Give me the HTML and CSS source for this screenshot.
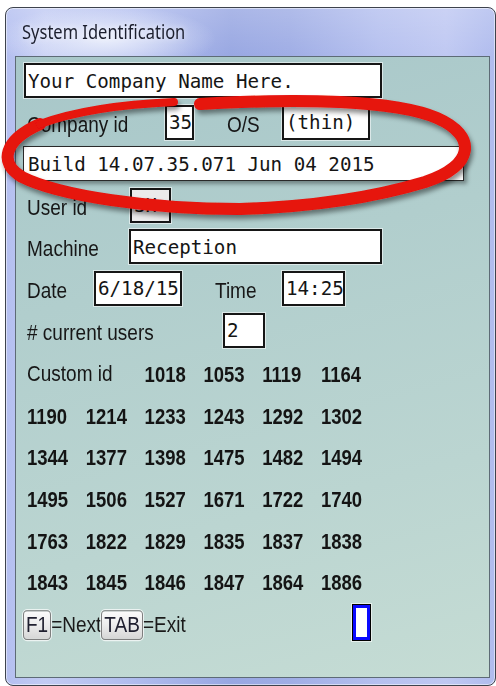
FILE: index.html
```html
<!DOCTYPE html>
<html lang="en">
<head>
<meta charset="utf-8">
<title>System Identification</title>
<link rel="stylesheet" href="styles.css">
</head>
<body>
<div class="page-heading"><h1>Supply Identification Tracking</h1></div>

<div class="window">
  <div class="titlebar"><span class="title">System Identification</span></div>

  <div class="client">
    <div class="row">
      <span class="field w-name">Your Company Name Here.</span>
    </div>
    <div class="row">
      <span class="label l-company">Company id</span>
      <span class="field w-id">35</span>
      <span class="label l-os">O/S</span>
      <span class="field w-os">(thin)</span>
    </div>
    <div class="row">
      <span class="field field-build">Build 14.07.35.071 Jun 04 2015</span>
    </div>
    <div class="row">
      <span class="label l-user">User id</span>
      <span class="field field-ro w-user">SH</span>
    </div>
    <div class="row">
      <span class="label l-machine">Machine</span>
      <span class="field w-machine">Reception</span>
    </div>
    <div class="row">
      <span class="label l-date">Date</span>
      <span class="field w-date">6/18/15</span>
      <span class="label l-time">Time</span>
      <span class="field w-time">14:25</span>
    </div>
    <div class="row">
      <span class="label l-users"># current users</span>
      <span class="field w-users">2</span>
    </div>

    <div class="ids">
      <span class="label custom">Custom id</span>
      <b>1018</b><b>1053</b><b>1119</b><b>1164</b>
      <b>1190</b><b>1214</b><b>1233</b><b>1243</b><b>1292</b><b>1302</b>
      <b>1344</b><b>1377</b><b>1398</b><b>1475</b><b>1482</b><b>1494</b>
      <b>1495</b><b>1506</b><b>1527</b><b>1671</b><b>1722</b><b>1740</b>
      <b>1763</b><b>1822</b><b>1829</b><b>1835</b><b>1837</b><b>1838</b>
      <b>1843</b><b>1845</b><b>1846</b><b>1847</b><b>1864</b><b>1886</b>
    </div>

    <div class="row help-row">
      <div class="help">
        <span class="key key-first">F1</span><span class="help-text">=Next</span>
        <span class="key">TAB</span><span class="help-text">=Exit</span>
      </div>
      <span class="caret"></span>
    </div>
  </div>
</div>

<svg class="markup" width="496" height="686" viewBox="0 0 496 686" aria-hidden="true">
  <defs>
    <filter id="shade" x="-10%" y="-40%" width="120%" height="180%">
      <feDropShadow dx="2" dy="4" stdDeviation="2.5" flood-color="#000" flood-opacity="0.45"/>
    </filter>
  </defs>
  <g fill="none" stroke="#e6120b" stroke-linecap="round" filter="url(#shade)">
    <path d="M200 104 C300 98 395 100 437 118 C478 136 474 166 425 182 C372 198 305 207 240 209 C150 209 60 196 22 177 C-2 163 4 140 40 124"
          stroke-width="12"/>
    <path d="M40 124 C78 110 128 104 174 102" stroke-width="8"/>
  </g>
</svg>
</body>
</html>
```

FILE: styles.css
```css
html, body {
  margin: 0;
  padding: 0;
  width: 496px;
  height: 686px;
  overflow: hidden;
  background: #fff;
}

/* page heading above the dialog, mostly scrolled out of view */
.page-heading {
  height: 7px;
  overflow: hidden;
}
.page-heading h1 {
  margin: -25px 0 0 0;
  padding-left: 133px;
  font: bold 26px/26px "Liberation Serif", "Times New Roman", serif;
  white-space: nowrap;
  color: #000;
  transform: translateY(-2px);
}

/* Aero style window frame */
.window {
  box-sizing: border-box;
  margin-left: 5px;
  width: 491px;
  height: 679px;
  border: 1px solid #3e434d;
  border-radius: 8px;
  padding: 0 5px 7px 9px;
  display: flex;
  flex-direction: column;
  box-shadow: inset 0 0 0 1px rgba(255, 255, 255, 0.5);
  background:
    radial-gradient(ellipse 110px 34px at 100px 31px, rgba(236, 240, 252, 0.95), rgba(236, 240, 252, 0) 100%),
    linear-gradient(180deg, rgba(255, 255, 255, 0.18), rgba(255, 255, 255, 0) 50px),
    linear-gradient(90deg, #b4bff0 0%, #c2cbf3 8%, #b0bcee 26%, #98a7e2 46%, #9fade5 58%, #b5c0ef 76%, #bfc8f2 90%, #b0bcee 100%);
}

.titlebar {
  height: 48px;
  flex: none;
  padding: 14.8px 0 0 7px;
  box-sizing: border-box;
}
.title {
  display: inline-block;
  font: 16.5px/20px "Noto Sans", "Open Sans", sans-serif;
  color: #1c1f2e;
  transform: scaleY(1.18);
  transform-origin: 0 16px;
  text-shadow: 0 0 6px rgba(255, 255, 255, 0.9);
}

/* dialog body */
.client {
  flex: 1;
  border: 1px solid #5d6b76;
  padding: 6px 0 0 11px;
  background: linear-gradient(165deg, #a8c7c9 0%, #b1cecd 35%, #bbd5d1 70%, #c5dcd4 100%);
}

.row {
  height: 41.6px;
  display: flex;
  align-items: flex-start;
}

.label {
  display: block;
  flex: none;
  box-sizing: border-box;
  padding-top: 3px;
  font: 19px/35px "Liberation Sans", Arial, sans-serif;
  color: #171717;
  white-space: nowrap;
  transform: scaleY(1.15);
  transform-origin: 0 27px;
}

.field {
  display: block;
  flex: none;
  box-sizing: border-box;
  height: 35px;
  border: 2px solid #161616;
  background: #fff;
  padding: 1.5px 0 0 2px;
  font: 19.2px/30px "DejaVu Sans Mono", "Liberation Mono", monospace;
  color: #151515;
  white-space: pre;
  overflow: hidden;
  box-shadow: 0 0 0 1px rgba(255, 255, 255, 0.55);
}
.field-ro {
  background: #ebebeb;
}
.field-build {
  margin-left: -4px;
  width: 441px;
  border: 1px solid #2a2a2a;
  padding: 2.5px 0 0 4px;
  box-shadow: 3px 3px 4px rgba(0, 0, 0, 0.35);
}

.w-name { margin-left: -3px; width: 358px; }
.l-company { width: 138px; }
.w-id { width: 29px; }
.l-os { margin-left: 33px; width: 55px; }
.w-os { width: 88px; }
.l-user { width: 103px; }
.w-user { width: 41px; }
.l-machine { width: 102px; }
.w-machine { width: 253px; }
.l-date { width: 67px; }
.w-date { width: 88px; }
.l-time { margin-left: 33px; width: 67px; }
.w-time { width: 63px; }
.l-users { width: 196px; }
.w-users { width: 42px; }

/* custom id list */
.ids {
  display: grid;
  grid-template-columns: repeat(6, 58.8px);
  grid-auto-rows: 41.6px;
}
.ids .custom {
  grid-column: span 2;
}
.ids b {
  display: block;
  box-sizing: border-box;
  padding-top: 4px;
  font: bold 18.5px/35px "Liberation Sans", Arial, sans-serif;
  color: #141414;
  transform: scaleY(1.2);
  transform-origin: 0 28px;
}

/* key help line */
.help-row {
  align-items: flex-start;
}
.help {
  width: 325px;
  flex: none;
  display: flex;
  align-items: baseline;
  padding-top: 4px;
  transform: scaleY(1.15);
  transform-origin: 0 28.1px;
  font: 19px/35px "Liberation Sans", Arial, sans-serif;
  color: #1a1a1a;
}
.key {
  box-sizing: border-box;
  height: 26px;
  border: 1px solid #7f7f7f;
  border-radius: 4px;
  padding: 0 2px;
  line-height: 24px;
  background: linear-gradient(180deg, #fbfbfb 0%, #ececec 50%, #d6d6d6 100%);
  box-shadow: 0 0 0 1px rgba(255, 255, 255, 0.7);
  color: #202030;
}
.key-first {
  margin-left: -4px;
}
.help-text {
  white-space: nowrap;
}

.caret {
  display: block;
  flex: none;
  box-sizing: border-box;
  width: 19px;
  height: 37px;
  border: 1px solid #000;
  background: #fff;
  box-shadow: inset 0 0 0 3px #0a0aff, 0 0 0 1px rgba(255, 255, 255, 0.6);
}

/* hand drawn annotation over the dialog */
.markup {
  position: absolute;
  left: 0;
  top: 0;
  pointer-events: none;
}
```
